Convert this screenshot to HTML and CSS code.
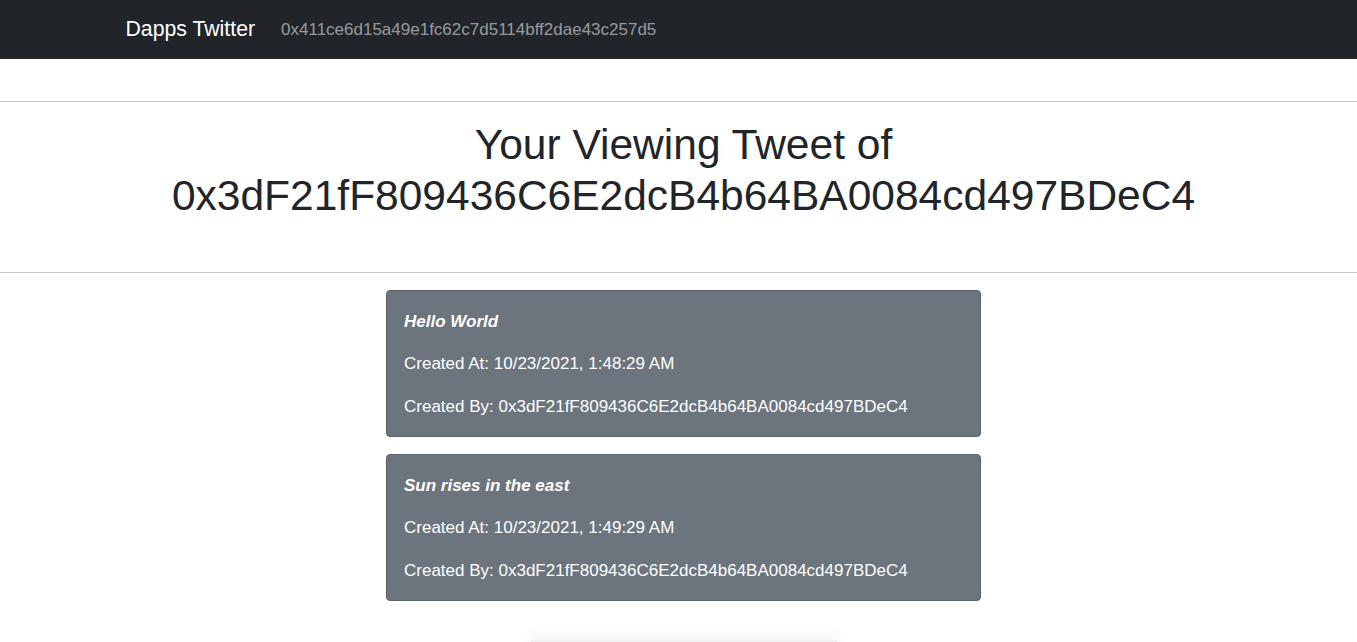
FILE: index.html
```html
<!DOCTYPE html>
<html lang="en">
<head>
<meta charset="utf-8">
<title>Dapps Twitter</title>
<link rel="stylesheet" href="styles.css">
</head>
<body>
<nav class="navbar">
  <div class="nav-inner">
    <a class="brand" href="#">Dapps Twitter</a>
    <span class="account">0x411ce6d15a49e1fc62c7d5114bff2dae43c257d5</span>
  </div>
</nav>
<main class="page">
  <hr class="rule rule-top">
  <h1 class="title">Your Viewing Tweet of<br>0x3dF21fF809436C6E2dcB4b64BA0084cd497BDeC4</h1>
  <hr class="rule rule-bottom">
  <div class="tweets">
    <div class="tweet">
      <p class="tweet-text"><b><i>Hello World</i></b></p>
      <p class="tweet-meta">Created At: 10/23/2021, 1:48:29 AM</p>
      <p class="tweet-meta">Created By: 0x3dF21fF809436C6E2dcB4b64BA0084cd497BDeC4</p>
    </div>
    <div class="tweet">
      <p class="tweet-text"><b><i>Sun rises in the east</i></b></p>
      <p class="tweet-meta">Created At: 10/23/2021, 1:49:29 AM</p>
      <p class="tweet-meta">Created By: 0x3dF21fF809436C6E2dcB4b64BA0084cd497BDeC4</p>
    </div>
  </div>
  <div class="footer-box"></div>
</main>
</body>
</html>
```

FILE: styles.css
```css
html {
  font-size: 17px;
}
body {
  margin: 0;
  font-family: "Liberation Sans", Arial, sans-serif;
  font-size: 17px;
  line-height: 1.5;
  color: #212529;
  background: #fff;
  overflow: hidden;
}
.navbar {
  background: #212529;
  height: 59px;
  display: flex;
  align-items: center;
}
.nav-inner {
  width: 1140px;
  margin: 0 auto;
  padding: 0 17px;
  box-sizing: border-box;
  display: flex;
  align-items: center;
}
.brand {
  font-size: 21.25px;
  color: #fff;
  text-decoration: none;
  line-height: 1.5;
}
.account {
  margin-left: 26px;
  color: rgba(255, 255, 255, 0.55);
  font-size: 17px;
}
.page {
  padding-left: 10px;
}
.rule {
  border: 0;
  border-top: 1px solid #cacaca;
  margin: 0;
  margin-left: -10px;
}
.rule-top {
  margin-top: 42px;
}
.title {
  margin: 17px 0 0;
  text-align: center;
  font-size: 42.5px;
  line-height: 51px;
  font-weight: 500;
}
.rule-bottom {
  margin-top: 50.5px;
}
.tweets {
  margin-top: 17px;
  display: flex;
  flex-direction: column;
  align-items: center;
  gap: 17px;
}
.tweet {
  width: 595px;
  box-sizing: border-box;
  background: #6c757d;
  border: 1px solid #5b636a;
  border-radius: 4px;
  padding: 18px 17px 16.5px;
  color: #fff;
}
.tweet p {
  margin: 0 0 17px;
}
.tweet p:last-child {
  margin-bottom: 0;
}
.footer-box {
  width: 306px;
  height: 60px;
  margin: 39px auto 0;
  background: #f2f2f2;
  box-shadow: 0 -4px 16px rgba(0, 0, 0, 0.06);
}
```
